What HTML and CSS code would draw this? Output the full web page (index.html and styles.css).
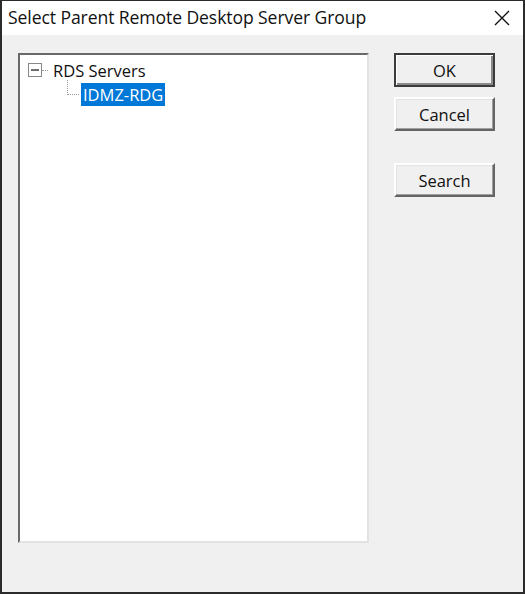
FILE: index.html
```html
<!DOCTYPE html>
<html>
<head>
<meta charset="utf-8">
<link rel="stylesheet" href="styles.css">
</head>
<body>
<div class="window">
  <div class="titlebar">
    <span class="title">Select Parent Remote Desktop Server Group</span>
    <svg class="close" width="16" height="16" viewBox="0 0 16 16"><path d="M1 1 L15 15 M15 1 L1 15" stroke="#111" stroke-width="1.4" fill="none"/></svg>
  </div>
  <div class="body">
    <div class="tree">
      <div class="node root">
        <span class="expander"><svg width="14" height="14" viewBox="0 0 14 14"><rect x="0.5" y="0.5" width="13" height="13" fill="#fff" stroke="#888"/><path d="M3 7 H11" stroke="#222" stroke-width="1.3"/></svg></span>
        <span class="hdots"></span>
        <span class="label">RDS Servers</span>
      </div>
      <div class="node child">
        <span class="elbow"></span>
        <span class="label selected">IDMZ-RDG</span>
      </div>
    </div>
    <div class="buttons">
      <button class="btn default">OK</button>
      <button class="btn">Cancel</button>
      <button class="btn search">Search</button>
    </div>
  </div>
</div>
</body>
</html>
```

FILE: styles.css
```css
html, body {
  margin: 0;
  padding: 0;
  background: #f0f0f0;
}
.window {
  width: 525px;
  height: 594px;
  box-sizing: border-box;
  border: 2px solid #2b2b2b;
  border-top: 1px solid #2b2b2b;
  display: flex;
  flex-direction: column;
  background: #f0f0f0;
  font-family: "Open Sans", "Noto Sans", sans-serif;
  color: #000;
}
.titlebar {
  height: 34px;
  background: #fff;
  display: flex;
  align-items: center;
  justify-content: space-between;
  padding: 0 13px 0 6px;
  flex: none;
}
.title {
  font-size: 17.6px;
  color: #111;
  letter-spacing: -0.1px;
  margin-top: -2px;
}
.close {
  display: block;
}
.body {
  flex: 1;
  display: flex;
  align-items: flex-start;
  padding: 18px 0 0 16px;
}
.tree {
  width: 351px;
  height: 490px;
  box-sizing: border-box;
  background: #fff;
  border-top: 2px solid #696969;
  border-left: 2px solid #696969;
  border-right: 2px solid #e3e3e3;
  border-bottom: 2px solid #e3e3e3;
  padding: 4px 0 0 8px;
  font-size: 16.5px;
  color: #111;
}
.node {
  display: flex;
  align-items: center;
  height: 22px;
}
.expander svg {
  display: block;
}
.hdots {
  width: 6px;
  border-top: 1px dotted #999;
  margin-right: 3px;
}
.child {
  margin-left: 39px;
  height: 25px;
  margin-top: 1px;
}
.elbow {
  width: 11px;
  height: 14px;
  border-left: 1px dotted #999;
  border-bottom: 1px dotted #999;
  margin-top: -14px;
  margin-right: 2px;
}
.label {
  padding: 1px 2px;
  line-height: 19px;
}
.selected {
  background: #0078d7;
  color: #fff;
  padding: 2px 2px;
}
.buttons {
  display: flex;
  flex-direction: column;
  margin-left: 25px;
  width: 101px;
}
.btn {
  width: 101px;
  height: 34px;
  box-sizing: border-box;
  background: #f0f0f0;
  font-family: "Open Sans", "Noto Sans", sans-serif;
  font-size: 16.5px;
  color: #111;
  border-top: 2px solid #fff;
  border-left: 2px solid #fff;
  border-right: 2px solid #646464;
  border-bottom: 2px solid #646464;
  box-shadow: inset -1px -1px 0 #a0a0a0, inset 1px 1px 0 #e3e3e3;
  margin-bottom: 10px;
  padding: 0;
}
.btn.default {
  border: 2px solid #3c3c3c;
  box-shadow: inset 1px 1px 0 #fff, inset -2px -2px 0 #8a8a8a;
}
.btn.search {
  margin-top: 22px;
}
```
